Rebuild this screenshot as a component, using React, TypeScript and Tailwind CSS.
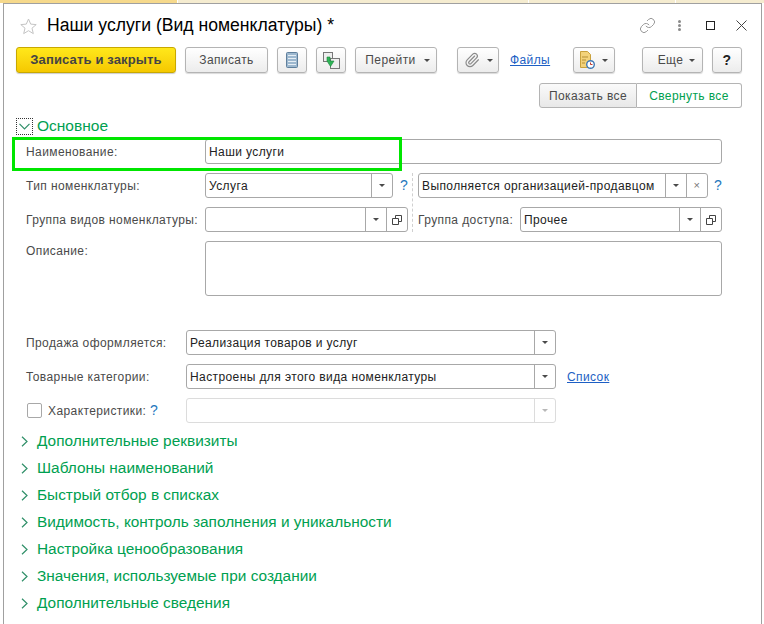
import type { ReactNode } from "react";
import { Link, Paperclip } from "lucide-react";

const SECTIONS = [
  "Дополнительные реквизиты",
  "Шаблоны наименований",
  "Быстрый отбор в списках",
  "Видимость, контроль заполнения и уникальности",
  "Настройка ценообразования",
  "Значения, используемые при создании",
  "Дополнительные сведения",
];

function Caret({ className = "border-t-[#4a4a4a]" }: { className?: string }) {
  return <span className={`inline-block h-0 w-0 border-x-[3px] border-t-[3px] border-x-transparent ${className}`} />;
}

function Btn({ className = "", children }: { className?: string; children: ReactNode }) {
  return (
    <div className={`flex h-[26px] items-center justify-center rounded-[3px] border border-[#b4b4b4] bg-gradient-to-b from-white to-[#ececec] text-[#4a4a4a] shadow-[0_1px_1px_rgba(0,0,0,0.15)] ${className}`}>
      {children}
    </div>
  );
}

function OpenIcon() {
  return (
    <svg width="10" height="10" viewBox="0 0 10 10" fill="none" stroke="#444" strokeWidth="1">
      <path d="M3.5 3.5V.5h6v6h-3M.5 3.5h6v6h-6z" />
    </svg>
  );
}

function Field({
  className = "",
  text = "",
  parts = [],
  disabled = false,
}: {
  className?: string;
  text?: string;
  parts?: ("caret" | "open" | "clear")[];
  disabled?: boolean;
}) {
  const line = disabled ? "border-[#dcdcdc]" : "border-[#a8a8a8]";
  return (
    <div className={`flex h-[25px] shrink-0 items-stretch rounded-[3px] border bg-white text-[#222] ${line} ${className}`}>
      <div className="flex min-w-0 flex-1 items-center whitespace-nowrap pl-[3px]">{text}</div>
      {parts.map((p) => (
        <div key={p} className={`flex w-[21px] items-center justify-center border-l ${line}`}>
          {p === "caret" && <Caret className={disabled ? "border-t-[#b8b8b8]" : "border-t-[#4a4a4a]"} />}
          {p === "open" && <OpenIcon />}
          {p === "clear" && <span className="text-[11px] leading-none text-[#777]">×</span>}
        </div>
      ))}
    </div>
  );
}

function Help({ className = "" }: { className?: string }) {
  return <span className={`text-[14px] text-[#1f78bd] ${className}`}>?</span>;
}

export default function App() {
  return (
    <div className="relative h-[624px] w-[764px] overflow-hidden bg-white font-['Liberation_Sans',Arial,sans-serif] text-xs tracking-[0.4px] text-[#4a4a4a]">
      <div className="flex h-[3px]">
        <div className="w-[177px] bg-[#f6d98c]" />
        <div className="w-[1px] bg-white" />
        <div className="w-[350px] bg-[#f5ecd0]" />
        <div className="w-[1px] bg-white" />
        <div className="w-[146px] bg-[#f5ecd0]" />
        <div className="w-[1px] bg-white" />
        <div className="flex-1 bg-[#f5ecd0]" />
      </div>

      <div className="ml-[3px] h-[621px] w-[759px] border-l border-r border-t border-[#a0a0a0] pl-[12px]">
        {/* заголовок */}
        <div className="flex h-[43px] items-center">
          <svg className="ml-[4px] mt-[1px]" width="17" height="17" viewBox="0 0 17 17" fill="none" stroke="#c4c4c4" strokeWidth="1">
            <path d="M8.5 1l2.2 5.1 5.5.5-4.2 3.6 1.3 5.4-4.8-2.9-4.8 2.9 1.3-5.4L.8 6.6l5.5-.5z" />
          </svg>
          <span className="ml-[10px] text-[17.6px] tracking-normal text-black">Наши услуги (Вид номенклатуры) *</span>
          <div className="ml-auto flex items-center">
            <Link className="mr-[22px] text-[#8a8a8a]" size={17} strokeWidth={1.25} />
            <div className="mr-[25px] flex flex-col gap-[1px]">
              <span className="h-[3px] w-[3px] rounded-full bg-[#8a8a8a]" />
              <span className="h-[3px] w-[3px] rounded-full bg-[#8a8a8a]" />
              <span className="h-[3px] w-[3px] rounded-full bg-[#8a8a8a]" />
            </div>
            <div className="mr-[21px] h-[9px] w-[9px] border border-[#222]" />
            <svg className="mr-[14px]" width="11" height="11" viewBox="0 0 11 11" stroke="#444" strokeWidth="1">
              <path d="M.5.5l10 10M10.5.5l-10 10" />
            </svg>
          </div>
        </div>

        {/* панель команд */}
        <div className="flex h-[26px] items-stretch">
          <div className="flex w-[160px] items-center justify-center rounded-[3px] border border-[#c8a800] bg-gradient-to-b from-[#ffe81a] to-[#f5c800] text-[13px] font-bold tracking-[0.15px] text-[#444] shadow-[0_1px_1px_rgba(0,0,0,0.2)]">
            Записать и закрыть
          </div>
          <Btn className="ml-[9px] w-[83px]">Записать</Btn>
          <Btn className="ml-[9px] w-[30px]">
            <svg width="12" height="16" viewBox="0 0 12 16">
              <rect x=".5" y=".5" width="11" height="15" rx="1" fill="#9db8cf" stroke="#5f7f9c" />
              <path d="M2 3.5h8M2 6.5h8M2 9.5h8M2 12.5h8" stroke="#e6eef5" />
            </svg>
          </Btn>
          <Btn className="ml-[9px] w-[30px]">
            <svg width="17" height="17" viewBox="0 0 17 17">
              <rect x=".5" y=".5" width="9" height="9" fill="#eee" stroke="#777" />
              <rect x="7.5" y="6.5" width="9" height="10" fill="#eee" stroke="#777" />
              <path d="M4 5h3v4h4l-3.5 5.5L4 9z" fill="#2fb457" stroke="#17863a" strokeWidth=".6" />
            </svg>
          </Btn>
          <Btn className="ml-[9px] w-[82px] gap-[8px] pl-[3px]">Перейти <Caret /></Btn>
          <Btn className="ml-[20px] w-[42px] gap-[7px]">
            <Paperclip size={16} strokeWidth={1.75} className="text-[#8a8a8a]" />
            <Caret />
          </Btn>
          <span className="ml-[11px] flex w-[41px] items-center text-[#1d5fc4] underline">Файлы</span>
          <Btn className="ml-[22px] w-[42px] gap-[7px]">
            <svg width="15" height="18" viewBox="0 0 15 18">
              <path d="M.5.5h7l3 3v13H.5z" fill="#f3d27a" stroke="#c9a13d" />
              <path d="M2 6h6M2 9h4M2 12h3" stroke="#b58f34" />
              <circle cx="10.5" cy="13.5" r="3.8" fill="#fff" stroke="#3f78b5" strokeWidth="1.4" />
              <path d="M10.5 11.5v2h2" stroke="#c0392b" fill="none" />
            </svg>
            <Caret />
          </Btn>
          <Btn className="ml-[27px] w-[61px] gap-[6px] pl-[8px]">Еще <Caret /></Btn>
          <Btn className="ml-[9px] w-[30px] text-[14px] font-bold text-[#222]">?</Btn>
        </div>

        {/* показать / свернуть */}
        <div className="mt-[10px] flex h-[25px] justify-end pr-[19px]">
          <div className="flex w-[98px] items-center justify-center rounded-l-[3px] border border-[#b4b4b4] bg-gradient-to-b from-[#fafafa] to-[#e8e8e8] text-[#4a4a4a]">Показать все</div>
          <div className="flex w-[105px] items-center justify-center rounded-r-[3px] border border-l-0 border-[#b4b4b4] bg-white text-[#00a050]">Свернуть все</div>
        </div>

        {/* Основное */}
        <div className="mt-[9px] flex h-[19px] items-center">
          <div className="flex h-[17px] w-[17px] items-center justify-center border border-dotted border-[#333]">
            <svg width="11" height="7" viewBox="0 0 11 7" fill="none" stroke="#2f8f68" strokeWidth="1.2"><path d="M.5.8l5 5 5-5" /></svg>
          </div>
          <span className="ml-[4px] text-[15.5px] tracking-normal text-[#00a050]">Основное</span>
        </div>

        <div className="ml-[10px] mt-[3px] flex items-center">
          <span className="w-[179px]">Наименование:</span>
          <Field className="w-[517px]" text="Наши услуги" />
        </div>

        <div className="ml-[10px] mt-[9px] flex items-center">
          <span className="w-[179px]">Тип номенклатуры:</span>
          <Field className="w-[188px]" text="Услуга" parts={["caret"]} />
          <Help className="ml-[7px] w-[12px]" />
          <div className="-mb-[34px] h-[59px] self-start border-l border-dashed border-[#d0d0d0]" />
          <Field className="ml-[5px] w-[290px]" text="Выполняется организацией-продавцом" parts={["caret", "clear"]} />
          <Help className="ml-[6px]" />
        </div>

        <div className="ml-[10px] mt-[9px] flex items-center">
          <span className="w-[179px] whitespace-nowrap">Группа видов номенклатуры:</span>
          <Field className="w-[203px]" parts={["caret", "open"]} />
          <span className="ml-[10px] w-[102px] whitespace-nowrap">Группа доступа:</span>
          <Field className="w-[202px]" text="Прочее" parts={["caret", "open"]} />
        </div>

        <div className="ml-[10px] mt-[9px] flex items-start">
          <span className="mt-[2px] w-[179px]">Описание:</span>
          <div className="h-[55px] w-[517px] rounded-[3px] border border-[#a8a8a8]" />
        </div>

        <div className="ml-[10px] mt-[34px] flex items-center">
          <span className="w-[160px]">Продажа оформляется:</span>
          <Field className="w-[370px]" text="Реализация товаров и услуг" parts={["caret"]} />
        </div>

        <div className="ml-[10px] mt-[9px] flex items-center">
          <span className="w-[160px]">Товарные категории:</span>
          <Field className="w-[370px]" text="Настроены для этого вида номенклатуры" parts={["caret"]} />
          <span className="ml-[11px] text-[#1d5fc4] underline">Список</span>
        </div>

        <div className="ml-[11px] mt-[9px] flex items-center">
          <div className="h-[15px] w-[15px] rounded-[2px] border border-[#a8a8a8]" />
          <span className="ml-[6px] w-[102px] whitespace-nowrap">Характеристики:</span>
          <Help className="w-[36px]" />
          <Field className="w-[370px]" parts={["caret"]} disabled />
        </div>

        <div className="mt-[5px] flex flex-col">
          {SECTIONS.map((s) => (
            <div key={s} className="flex h-[27px] items-center pl-[5px]">
              <svg width="7" height="11" viewBox="0 0 7 11" fill="none" stroke="#2f8f68" strokeWidth="1.2"><path d="M1 .8l5 4.7-5 4.7" /></svg>
              <span className="ml-[9px] text-[15.4px] tracking-normal text-[#00a050]">{s}</span>
            </div>
          ))}
        </div>
      </div>

      {/* зелёная рамка поверх формы */}
      <div className="absolute left-[12px] top-[137px] h-[34px] w-[390px] border-[3px] border-[#00e600]" />
    </div>
  );
}
